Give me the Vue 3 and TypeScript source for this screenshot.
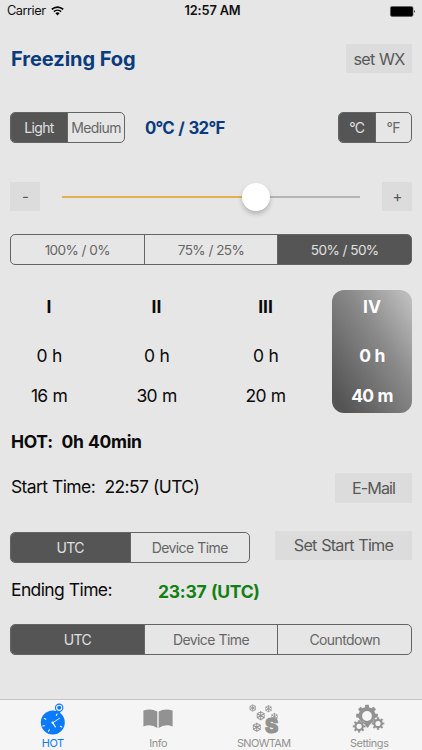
<script setup lang="ts">
import { ref } from 'vue'

interface Fluid {
  name: string
  hours: string
  minutes: string
}

const intensities = ['Light', 'Medium']
const units = ['°C', '°F']
const mixtures = ['100% / 0%', '75% / 25%', '50% / 50%']
const startZones = ['UTC', 'Device Time']
const endZones = ['UTC', 'Device Time', 'Countdown']
const fluids: Fluid[] = [
  { name: 'I', hours: '0 h', minutes: '16 m' },
  { name: 'II', hours: '0 h', minutes: '30 m' },
  { name: 'III', hours: '0 h', minutes: '20 m' },
  { name: 'IV', hours: '0 h', minutes: '40 m' },
]

const intensity = ref(0)
const unit = ref(0)
const mixture = ref(2)
const fluid = ref(3)
const startZone = ref(0)
const endZone = ref(0)
const level = ref(65)
const tab = ref(0)

const flakes = [
  { x: 4.7, y: 5, r: 3.6 },
  { x: 20.5, y: 5.7, r: 3.6 },
  { x: 12.7, y: 12.8, r: 4.6 },
  { x: 8.8, y: 24.3, r: 4.6 },
  { x: 26.5, y: 13.6, r: 3.6 },
]
const spokes = [0, 60, 120]

function gear(cx: number, cy: number, outer: number, inner: number, teeth: number): string {
  const step = (Math.PI * 2) / teeth
  const points: string[] = []
  for (let i = 0; i < teeth; i++) {
    const a = i * step - Math.PI / 2
    const corners: [number, number][] = [
      [-0.3, inner],
      [-0.22, outer],
      [0.22, outer],
      [0.3, inner],
    ]
    for (const [offset, radius] of corners) {
      const t = a + offset * step
      points.push(`${(cx + Math.cos(t) * radius).toFixed(2)},${(cy + Math.sin(t) * radius).toFixed(2)}`)
    }
  }
  return points.join(' ')
}
</script>

<template>
  <div class="screen">
    <header class="status">
      <div class="carrier">
        <span>Carrier</span>
        <svg class="wifi" width="13" height="10" viewBox="0 0 13 10">
          <path d="M0.8 3.4 A8.2 8.2 0 0 1 12.2 3.4" fill="none" stroke="#000" stroke-width="1.7" />
          <path d="M2.9 5.7 A5.2 5.2 0 0 1 10.1 5.7" fill="none" stroke="#000" stroke-width="1.6" />
          <path d="M6.5 9.6 L4.4 7.3 A3 3 0 0 1 8.6 7.3 Z" fill="#000" />
        </svg>
      </div>
      <span class="clock">12:57 AM</span>
      <svg class="battery" width="26" height="11" viewBox="0 0 26 11">
        <rect x="0.4" y="0.4" width="22.6" height="10" rx="1.6" fill="#000" stroke="#555" stroke-width="0.6" />
        <path d="M24 3.7 Q25.6 5.4 24 7.1 Z" fill="#000" />
      </svg>
    </header>

    <main class="content">
      <div class="row head">
        <h1>Freezing Fog</h1>
        <button class="btn wx">set WX</button>
      </div>

      <div class="row conditions">
        <div class="seg intensity">
          <button v-for="(s, i) in intensities" :key="s" :class="{ on: intensity === i }" @click="intensity = i">{{ s }}</button>
        </div>
        <span class="temp">0°C / 32°F</span>
        <div class="seg unit">
          <button v-for="(s, i) in units" :key="s" :class="{ on: unit === i }" @click="unit = i">{{ s }}</button>
        </div>
      </div>

      <div class="row slide">
        <button class="btn square" @click="level--">-</button>
        <div class="slider">
          <div class="fill" :style="{ width: level + '%' }"></div>
          <div class="thumb"></div>
          <div class="rest"></div>
        </div>
        <button class="btn square" @click="level++">+</button>
      </div>

      <div class="seg mixture">
        <button v-for="(s, i) in mixtures" :key="s" :class="{ on: mixture === i }" @click="mixture = i">{{ s }}</button>
      </div>

      <div class="fluids">
        <div v-for="(f, i) in fluids" :key="f.name" class="fluid" :class="{ chosen: fluid === i }" @click="fluid = i">
          <span class="name">{{ f.name }}</span>
          <span class="hours">{{ f.hours }}</span>
          <span class="minutes">{{ f.minutes }}</span>
        </div>
      </div>

      <p class="hot">HOT:&nbsp; 0h 40min</p>

      <div class="row start">
        <span class="label">Start Time:&nbsp; 22:57 (UTC)</span>
        <button class="btn mail">E-Mail</button>
      </div>

      <div class="row zone">
        <div class="seg start-zone">
          <button v-for="(s, i) in startZones" :key="s" :class="{ on: startZone === i }" @click="startZone = i">{{ s }}</button>
        </div>
        <button class="btn set">Set Start Time</button>
      </div>

      <div class="row ending">
        <span class="label end-label">Ending Time:</span>
        <span class="end">23:37 (UTC)</span>
      </div>

      <div class="seg end-zone">
        <button v-for="(s, i) in endZones" :key="s" :class="{ on: endZone === i }" @click="endZone = i">{{ s }}</button>
      </div>
    </main>

    <nav class="tabs">
      <a class="tab" :class="{ active: tab === 0 }" @click="tab = 0">
        <svg width="32" height="32" viewBox="0 0 32 32">
          <circle cx="15.8" cy="19.4" r="12" fill="currentColor" />
          <path d="M18.6 9.6 L20.4 5.6 L24.2 7 L22.6 11 Z" fill="currentColor" />
          <circle cx="22.2" cy="4.8" r="3.7" fill="#f5f5f5" stroke="currentColor" stroke-width="1.1" />
          <circle cx="22.2" cy="4.8" r="2" fill="currentColor" />
          <g stroke="#f5f5f5" fill="none" stroke-linecap="round">
            <path d="M15.8 19.8 L22.6 15.2" stroke-width="0.9" />
            <path d="M15.6 19.6 L18.4 23.8" stroke-width="1.2" />
            <path d="M19.3 12.4 L20 11 M7.4 15.4 L8.8 16.2 M5.8 23 L7.3 22.6 M11.6 28.2 L12.3 26.8 M23.4 23.2 L24.8 24" stroke-width="1.1" />
          </g>
          <circle cx="15.7" cy="19.6" r="1.2" fill="#f5f5f5" />
        </svg>
        <span>HOT</span>
      </a>
      <a class="tab" :class="{ active: tab === 1 }" @click="tab = 1">
        <svg width="32" height="32" viewBox="0 0 32 32">
          <path d="M1.4 7.6 Q9.2 5 15.3 8.6 V25 Q9.2 20.6 1.4 23.4 Z" fill="currentColor" />
          <path d="M30.6 7.6 Q22.8 5 16.7 8.6 V25 Q22.8 20.6 30.6 23.4 Z" fill="currentColor" />
        </svg>
        <span>Info</span>
      </a>
      <a class="tab" :class="{ active: tab === 2 }" @click="tab = 2">
        <svg width="32" height="32" viewBox="0 0 32 32">
          <g v-for="(f, i) in flakes" :key="i" :transform="`translate(${f.x} ${f.y}) scale(${f.r / 4})`" fill="none" stroke="currentColor">
            <circle r="3.2" stroke-width="0.8" />
            <path v-for="a in spokes" :key="a" d="M0 -3.9 V3.9" :transform="`rotate(${a})`" stroke-width="0.9" />
          </g>
          <text class="big-s" x="16.9" y="30.4">S</text>
        </svg>
        <span>SNOWTAM</span>
      </a>
      <a class="tab" :class="{ active: tab === 3 }" @click="tab = 3">
        <svg width="32" height="32" viewBox="0 0 32 32">
          <path d="M10 19.6 L18.6 19.6 L14.5 25 Z" fill="currentColor" />
          <polygon :points="gear(14, 12.7, 11, 8.6, 8)" fill="currentColor" />
          <circle cx="14" cy="13" r="4.9" fill="#f5f5f5" />
          <polygon :points="gear(6.1, 23.3, 6.5, 4.9, 8)" fill="currentColor" stroke="#f5f5f5" stroke-width="0.3" />
          <circle cx="6.1" cy="23.3" r="2.6" fill="#f5f5f5" />
          <polygon :points="gear(25, 20.5, 6.5, 4.9, 8)" fill="currentColor" stroke="#f5f5f5" stroke-width="0.3" />
          <circle cx="25" cy="20.5" r="2.6" fill="#f5f5f5" />
        </svg>
        <span>Settings</span>
      </a>
    </nav>
  </div>
</template>

<style>
body {
  background: #e6e6e6;
}
</style>

<style scoped>
.screen {
  display: flex;
  flex-direction: column;
  width: 422px;
  height: 750px;
  box-sizing: border-box;
  overflow: hidden;
  background: #e6e6e6;
  color: #0a0a0a;
  font-family: Inter, 'Liberation Sans', sans-serif;
  font-size: 17.5px;
}
.status {
  display: grid;
  grid-template-columns: 1fr auto 1fr;
  align-items: center;
  height: 22px;
  padding: 0 6px 0 7px;
  font-size: 12.8px;
  line-height: 22px;
  color: #111;
}
.carrier {
  display: flex;
  align-items: center;
  gap: 6px;
  letter-spacing: -0.5px;
}
.wifi {
  margin-bottom: 1px;
}
.clock {
  font-weight: 600;
  letter-spacing: -0.15px;
  padding-left: 2px;
}
.battery {
  justify-self: end;
}
.content {
  display: flex;
  flex-direction: column;
  flex: 1;
  padding: 22px 10px 0;
}
.row {
  display: flex;
  align-items: center;
  justify-content: space-between;
}
button {
  margin: 0;
  padding: 0;
  border: 0;
  background: none;
  font-family: inherit;
  color: #585858;
  white-space: nowrap;
}
.btn {
  height: 29px;
  background: #dcdcdc;
  font-size: 16.2px;
  letter-spacing: -0.78px;
  word-spacing: 0.8px;
}
.wx {
  width: 66px;
  padding-top: 1px;
}
.head {
  height: 29px;
}
h1 {
  margin: 0 0 0 1px;
  padding-top: 2px;
  font-size: 20px;
  line-height: 29px;
  font-weight: 700;
  letter-spacing: -0.05px;
  color: #0a3c7d;
}
.seg {
  display: flex;
  height: 31px;
  box-sizing: border-box;
  border: 1px solid #646464;
  border-radius: 5px;
  overflow: hidden;
}
.seg button {
  flex: 1 1 0;
  min-width: 0;
  font-size: 14px;
  letter-spacing: -0.62px;
  word-spacing: 0.6px;
  color: #666;
}
.seg button + button {
  border-left: 1px solid #646464;
}
.seg button.on {
  background: #555;
  color: #e0e0e0;
}
.seg button.on:last-child {
  box-shadow: 1px 0 0 #555;
}
.conditions {
  height: 31px;
  margin-top: 39px;
}
.intensity {
  width: 115px;
}
.temp {
  margin-left: 20px;
  margin-right: auto;
  font-weight: 700;
  font-size: 16.8px;
  letter-spacing: -0.7px;
  word-spacing: 1px;
  color: #0a3c7d;
}
.unit {
  width: 74px;
}
.slide {
  height: 29px;
  margin-top: 39px;
}
.square {
  width: 30px;
  font-size: 15px;
}
.slider {
  display: flex;
  align-items: center;
  width: 298px;
}
.fill {
  height: 2px;
  margin-right: -14px;
  background: #e2b04c;
}
.thumb {
  flex: none;
  width: 28px;
  height: 28px;
  border-radius: 50%;
  background: #fff;
  box-shadow: 0 3px 5px rgba(0, 0, 0, 0.22);
  z-index: 1;
}
.rest {
  flex: 1;
  height: 2px;
  margin-left: -14px;
  background: #b4b4b4;
}
.mixture {
  margin-top: 23px;
}
.seg.mixture button {
  font-size: 13.6px;
  letter-spacing: -0.65px;
  word-spacing: 0.3px;
}
.fluids {
  display: grid;
  grid-template-columns: 78px 137px 81px 106px;
  margin-top: 25px;
}
.fluid {
  display: flex;
  flex-direction: column;
  align-items: center;
  height: 122.5px;
  border-radius: 12px;
  letter-spacing: -0.8px;
  word-spacing: 1px;
}
.fluid:last-child {
  margin-left: 26px;
}
.fluid span {
  line-height: 22px;
}
.name {
  margin-top: 6px;
  font-weight: 700;
  letter-spacing: 0;
}
.hours {
  margin-top: 27px;
}
.minutes {
  margin-top: 18px;
}
.chosen {
  color: #fff;
  font-weight: 700;
  background: linear-gradient(to top right, #555 10%, #8a8a8a 60%, #c4c4c4 100%);
}
.hot {
  margin: 18px 0 0 1px;
  font-weight: 700;
  line-height: 22px;
  letter-spacing: -0.32px;
  word-spacing: 0.6px;
}
.start {
  height: 30px;
  margin-top: 20px;
}
.label {
  margin-left: 1px;
  padding-bottom: 2px;
  letter-spacing: -0.62px;
  word-spacing: 0.4px;
}
.mail {
  width: 77px;
  height: 30px;
  letter-spacing: -0.95px;
}
.zone {
  height: 31px;
  margin-top: 29px;
}
.start-zone {
  width: 240px;
}
.set {
  width: 137px;
  margin-bottom: 4px;
}
.ending {
  justify-content: flex-start;
  height: 24px;
  margin-top: 16px;
}
.end-label {
  width: 147px;
}
.end {
  margin-top: 2px;
  font-weight: 700;
  letter-spacing: -0.25px;
  word-spacing: 0.6px;
  color: #128012;
}
.end-zone {
  margin-top: 21px;
}
.tabs {
  display: flex;
  height: 51px;
  box-sizing: border-box;
  border-top: 1px solid #c4c4c4;
  background: #f5f5f5;
}
.tab {
  display: flex;
  flex: 1;
  flex-direction: column;
  align-items: center;
  padding-top: 3px;
  color: #929292;
  font-size: 10.9px;
  line-height: 14px;
  letter-spacing: -0.4px;
}
.tab:nth-child(3) {
  letter-spacing: -0.6px;
}
.tab.active {
  color: #0a7aff;
}
.tab svg {
  overflow: visible;
}
.tab span {
  margin-top: 1px;
}
.big-s {
  font-family: Inter, sans-serif;
  font-size: 20px;
  font-weight: 900;
  letter-spacing: 0;
  fill: currentColor;
  stroke: currentColor;
  stroke-width: 0.9;
}
</style>
